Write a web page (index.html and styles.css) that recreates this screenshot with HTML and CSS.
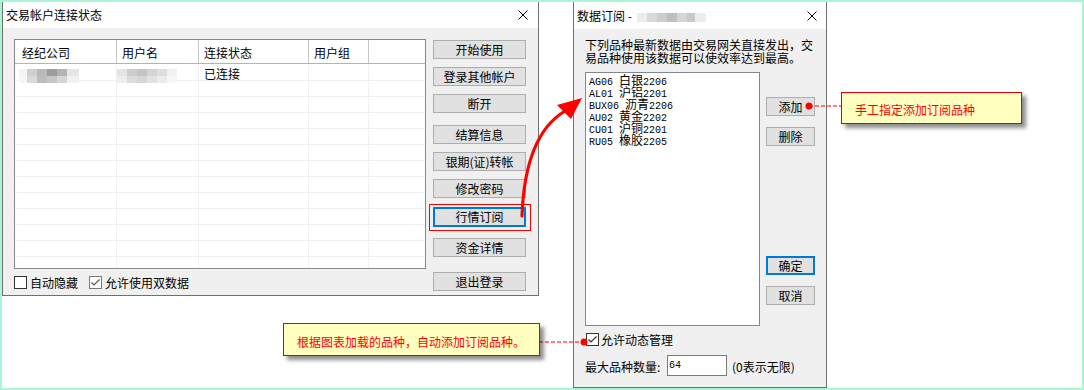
FILE: index.html
```html
<!DOCTYPE html>
<html lang="zh-CN">
<head>
  <meta charset="UTF-8" />
  <title>交易帐户连接状态</title>
  <link rel="stylesheet" href="styles.css">
</head>
<body>
  <div class="page">

    <!-- 交易帐户连接状态 -->
    <div class="dialog account">
      <div class="titlebar">
        <span class="title">交易帐户连接状态</span>
        <svg class="close" width="10" height="10" viewBox="0 0 10 10"><path d="M0.5 0.5L9.5 9.5M9.5 0.5L0.5 9.5" stroke="#000" stroke-width="1" fill="none"/></svg>
      </div>
      <div class="body">
        <div class="main-col">
          <div class="listview">
            <div class="lv-head">
              <div class="col c1">经纪公司</div>
              <div class="col c2">用户名</div>
              <div class="col c3">连接状态</div>
              <div class="col c4">用户组</div>
              <div class="col c5"></div>
            </div>
            <div class="lv-rows">
              <div class="lv-row">
                <div class="col c1"><span class="mosaic m1"></span></div>
                <div class="col c2"><span class="mosaic m2"></span></div>
                <div class="col c3">已连接</div>
                <div class="col c4"></div>
                <div class="col c5"></div>
              </div>
              <div class="lv-row"><div class="col c1"></div><div class="col c2"></div><div class="col c3"></div><div class="col c4"></div><div class="col c5"></div></div>
              <div class="lv-row"><div class="col c1"></div><div class="col c2"></div><div class="col c3"></div><div class="col c4"></div><div class="col c5"></div></div>
              <div class="lv-row"><div class="col c1"></div><div class="col c2"></div><div class="col c3"></div><div class="col c4"></div><div class="col c5"></div></div>
              <div class="lv-row"><div class="col c1"></div><div class="col c2"></div><div class="col c3"></div><div class="col c4"></div><div class="col c5"></div></div>
              <div class="lv-row"><div class="col c1"></div><div class="col c2"></div><div class="col c3"></div><div class="col c4"></div><div class="col c5"></div></div>
              <div class="lv-row"><div class="col c1"></div><div class="col c2"></div><div class="col c3"></div><div class="col c4"></div><div class="col c5"></div></div>
              <div class="lv-row"><div class="col c1"></div><div class="col c2"></div><div class="col c3"></div><div class="col c4"></div><div class="col c5"></div></div>
              <div class="lv-row"><div class="col c1"></div><div class="col c2"></div><div class="col c3"></div><div class="col c4"></div><div class="col c5"></div></div>
              <div class="lv-row"><div class="col c1"></div><div class="col c2"></div><div class="col c3"></div><div class="col c4"></div><div class="col c5"></div></div>
              <div class="lv-row"><div class="col c1"></div><div class="col c2"></div><div class="col c3"></div><div class="col c4"></div><div class="col c5"></div></div>
              <div class="lv-row"><div class="col c1"></div><div class="col c2"></div><div class="col c3"></div><div class="col c4"></div><div class="col c5"></div></div>
              <div class="lv-row"><div class="col c1"></div><div class="col c2"></div><div class="col c3"></div><div class="col c4"></div><div class="col c5"></div></div>
            </div>
          </div>
          <div class="checks">
            <label class="check"><span class="box"></span>自动隐藏</label>
            <label class="check second"><span class="box light"><svg width="11" height="11" viewBox="0 0 11 11"><path d="M1.5 5.5L4 8L9.5 2.5" stroke="#555" stroke-width="1.2" fill="none"/></svg></span>允许使用双数据</label>
          </div>
        </div>
        <div class="btn-col">
          <div class="btn">开始使用</div>
          <div class="btn">登录其他帐户</div>
          <div class="btn">断开</div>
          <div class="btn sep">结算信息</div>
          <div class="btn">银期(证)转帐</div>
          <div class="btn">修改密码</div>
          <div class="btn focus">行情订阅</div>
          <div class="btn sep-mid">资金详情</div>
          <div class="btn sep-lg">退出登录</div>
        </div>
      </div>
    </div>

    <!-- 数据订阅 -->
    <div class="dialog subscribe">
      <div class="titlebar">
        <span class="title">数据订阅 - <span class="mosaic m3"></span></span>
        <svg class="close" width="10" height="10" viewBox="0 0 10 10"><path d="M0.5 0.5L9.5 9.5M9.5 0.5L0.5 9.5" stroke="#000" stroke-width="1" fill="none"/></svg>
      </div>
      <div class="body">
        <p class="intro">下列品种最新数据由交易网关直接发出，交<br>易品种使用该数据可以使效率达到最高。</p>
        <div class="sub-main">
          <div class="listbox">
            <div class="item">AG06 <span class="cn">白银</span>2206</div>
            <div class="item">AL01 <span class="cn">沪铝</span>2201</div>
            <div class="item">BUX06 <span class="cn">沥青</span>2206</div>
            <div class="item">AU02 <span class="cn">黄金</span>2202</div>
            <div class="item">CU01 <span class="cn">沪铜</span>2201</div>
            <div class="item">RU05 <span class="cn">橡胶</span>2205</div>
          </div>
          <div class="sbtn-col">
            <div class="btn sbtn">添加</div>
            <div class="btn sbtn">删除</div>
            <div class="btn sbtn focus push">确定</div>
            <div class="btn sbtn">取消</div>
          </div>
        </div>
        <label class="check dyn"><span class="box"><svg width="11" height="11" viewBox="0 0 11 11"><path d="M1.5 5.5L4 8L9.5 2.5" stroke="#333" stroke-width="1.2" fill="none"/></svg></span>允许动态管理</label>
        <div class="max-row">
          <span class="max-label">最大品种数量:</span>
          <span class="input">64</span>
          <span class="hint">(0表示无限)</span>
        </div>
      </div>
    </div>

    <!-- annotations -->
    <svg class="overlay" width="1084" height="390" viewBox="0 0 1084 390">
      <rect x="429.5" y="204.5" width="101" height="26" fill="none" stroke="#f00" stroke-width="1"/>
      <path d="M522 216C524 160 540 126 565 111" fill="none" stroke="#f00" stroke-width="3.2" stroke-linecap="round"/>
      <polygon points="582,98 557,105 571,119" fill="#f00"/>
      <line x1="809" y1="106" x2="841" y2="106" stroke="#f00" stroke-width="1.2" stroke-dasharray="4 2"/>
      <circle cx="809" cy="106" r="3.5" fill="#f00"/>
      <line x1="539" y1="342" x2="584" y2="342" stroke="#f00" stroke-width="1.2" stroke-dasharray="4 2"/>
      <circle cx="584" cy="342" r="3.5" fill="#f00"/>
    </svg>
    <div class="callout callout-add">手工指定添加订阅品种</div>
    <div class="callout callout-auto">根据图表加载的品种，自动添加订阅品种。</div>
  </div>
</body>
</html>
```

FILE: styles.css
```css
/* Base */
* {
  box-sizing: border-box;
}

body {
  margin: 0;
  font-family: "Noto Sans CJK SC", "Liberation Sans", sans-serif;
  font-size: 12px;
  color: #000;
}

.page {
  position: relative;
  width: 1084px;
  height: 390px;
  border: 2px solid #aaf5d6;
  background: #fff;
  display: flex;
  align-items: flex-start;
  overflow: hidden;
}

/* Dialog frame */
.dialog {
  display: flex;
  flex-direction: column;
  background: #f0f0f0;
  border: 1px solid #707070;
  border-top: none;
}

.account {
  width: 537px;
  height: 294px;
}

.subscribe {
  width: 254px;
  height: 386px;
  margin-left: 34px;
}

.titlebar {
  display: flex;
  align-items: center;
  justify-content: space-between;
  background: #fff;
  padding: 0 10px 0 3px;
  line-height: 14px;
}

.account .titlebar {
  height: 26px;
}

.subscribe .titlebar {
  height: 27px;
  padding: 0 9px 0 3px;
}

.close {
  display: block;
}

/* Pixelated blur over private text */
.mosaic {
  display: inline-block;
  vertical-align: middle;
  filter: blur(0.5px);
}

.m1 {
  width: 60px;
  height: 14px;
  margin: 1px 0 0 4px;
  background:
    linear-gradient(90deg, #f4f4f4 0 8px, #cfcfcf 8px 18px, #b9b9b9 18px 28px, #9c9c9c 28px 38px, #b3b3b3 38px 48px, #e6e6e6 48px 60px) top / 100% 7px no-repeat,
    linear-gradient(90deg, #f6f6f6 0 8px, #dadada 8px 18px, #bdbdbd 18px 28px, #c6c6c6 28px 38px, #d5d5d5 38px 48px, #f1f1f1 48px 60px) bottom / 100% 7px no-repeat;
}

.m2 {
  width: 60px;
  height: 14px;
  margin: 1px 0 0 0;
  background:
    linear-gradient(90deg, #e4e4e4 0 10px, #cdcdcd 10px 20px, #c4c4c4 20px 30px, #d4d4d4 30px 40px, #dedede 40px 50px, #f0f0f0 50px 60px) top / 100% 7px no-repeat,
    linear-gradient(90deg, #ededed 0 10px, #dcdcdc 10px 20px, #d6d6d6 20px 30px, #e2e2e2 30px 40px, #ebebeb 40px 50px, #f6f6f6 50px 60px) bottom / 100% 7px no-repeat;
}

.m3 {
  width: 69px;
  height: 9px;
  margin-left: 2px;
  background: linear-gradient(90deg, #ececec 0 10px, #d9d9d9 10px 20px, #cdcdcd 20px 30px, #bfbfbf 30px 40px, #d6d6d6 40px 50px, #c9c9c9 50px 58px, #ededed 58px 69px);
}

/* Left dialog body */
.account .body {
  flex: 1;
  display: flex;
  gap: 7px;
  padding: 11px 0 0 11px;
}

.listview {
  width: 412px;
  height: 230px;
  background: #fff;
  border: 1px solid #828790;
  overflow: hidden;
}

.lv-head,
.lv-row {
  display: flex;
}

.lv-head {
  height: 24px;
  border-bottom: 1px solid #b4b4b4;
}

.lv-head .col {
  border-right: 1px solid #c6c6c6;
  padding: 5px 0 0 5px;
  line-height: 16px;
}

.lv-rows {
  padding-top: 1px;
}

.lv-row {
  height: 16px;
  border-bottom: 1px solid #f0f0f0;
}

.lv-row .col {
  border-right: 1px solid #f0f0f0;
  padding: 1px 0 0 5px;
  line-height: 15px;
  white-space: nowrap;
}

.col.c1 { width: 102px; padding-left: 7px; }
.col.c2 { width: 82px; }
.col.c3 { width: 110px; }
.col.c4 { width: 60px; }
.col.c5 { flex: 1; border-right: none; }

.lv-row .col.c1 { padding-left: 0; }
.lv-row .col.c2 { padding-left: 0; }

/* Checkboxes */
.checks {
  display: flex;
  align-items: center;
  height: 13px;
  margin-top: 7px;
}

.check {
  display: flex;
  align-items: center;
  gap: 3px;
  line-height: 14px;
}

.check.second {
  margin-left: 11px;
}

.box {
  width: 13px;
  height: 13px;
  border: 1px solid #333;
  background: #fff;
  display: flex;
  align-items: center;
  justify-content: center;
}

.box.light {
  border-color: #7a7a7a;
}

/* Buttons */
.btn-col {
  display: flex;
  flex-direction: column;
  width: 93px;
  padding-top: 1px;
}

.btn {
  height: 19px;
  border: 1px solid #adadad;
  background: #e1e1e1;
  text-align: center;
  line-height: 17px;
  white-space: nowrap;
}

.btn-col .btn + .btn {
  margin-top: 8px;
}

.btn-col .btn.sep {
  margin-top: 12px;
}

.btn-col .btn.focus {
  margin-top: 9px;
  height: 20px;
}

.btn-col .btn.sep-mid {
  margin-top: 11px;
}

.btn-col .btn.sep-lg {
  margin-top: 15px;
}

.btn.focus {
  border: 2px solid #0078d7;
  line-height: 15px;
}

/* Right dialog body */
.subscribe .body {
  flex: 1;
  display: flex;
  flex-direction: column;
  padding: 9px 0 0 11px;
}

.intro {
  margin: 0;
  line-height: 13px;
}

.sub-main {
  display: flex;
  gap: 6px;
  margin-top: 8px;
}

.listbox {
  width: 175px;
  height: 254px;
  background: #fff;
  border: 1px solid #828790;
  padding: 1px 3px;
  font-family: "Liberation Mono", "Noto Sans CJK SC", monospace;
  font-size: 10px;
}

.listbox .item {
  height: 12px;
  line-height: 12px;
  white-space: pre;
}

.listbox .cn {
  font-family: "Noto Sans CJK SC", sans-serif;
  font-size: 12px;
  line-height: 12px;
}

.sbtn-col {
  display: flex;
  flex-direction: column;
  width: 49px;
  padding: 25px 0 21px;
}

.sbtn + .sbtn {
  margin-top: 11px;
}

.sbtn.push {
  margin-top: auto;
}

.check.dyn {
  margin: 7px 0 0 1px;
  gap: 2px;
  height: 13px;
}

.max-row {
  display: flex;
  align-items: center;
  margin-top: 9px;
  height: 21px;
}

.max-label {
  width: 82px;
  padding-top: 2px;
}

.input {
  width: 60px;
  height: 21px;
  background: #fff;
  border: 1px solid #7a7a7a;
  padding-left: 1px;
  font-family: "Liberation Mono", monospace;
  font-size: 10px;
  line-height: 19px;
}

.hint {
  margin-left: 5px;
  padding-top: 2px;
}

/* Annotations */
.overlay {
  position: absolute;
  left: -2px;
  top: -2px;
}

.callout {
  position: absolute;
  display: flex;
  align-items: center;
  padding: 3px 0 0 13px;
  background: #ffffc0;
  border: 1px solid #e00000;
  color: #f00;
  box-shadow: 4px 4px 4px rgba(0, 0, 0, 0.45);
}

.callout-add {
  left: 839px;
  top: 90px;
  width: 181px;
  height: 32px;
}

.callout-auto {
  left: 281px;
  top: 321px;
  width: 257px;
  height: 33px;
}
```
